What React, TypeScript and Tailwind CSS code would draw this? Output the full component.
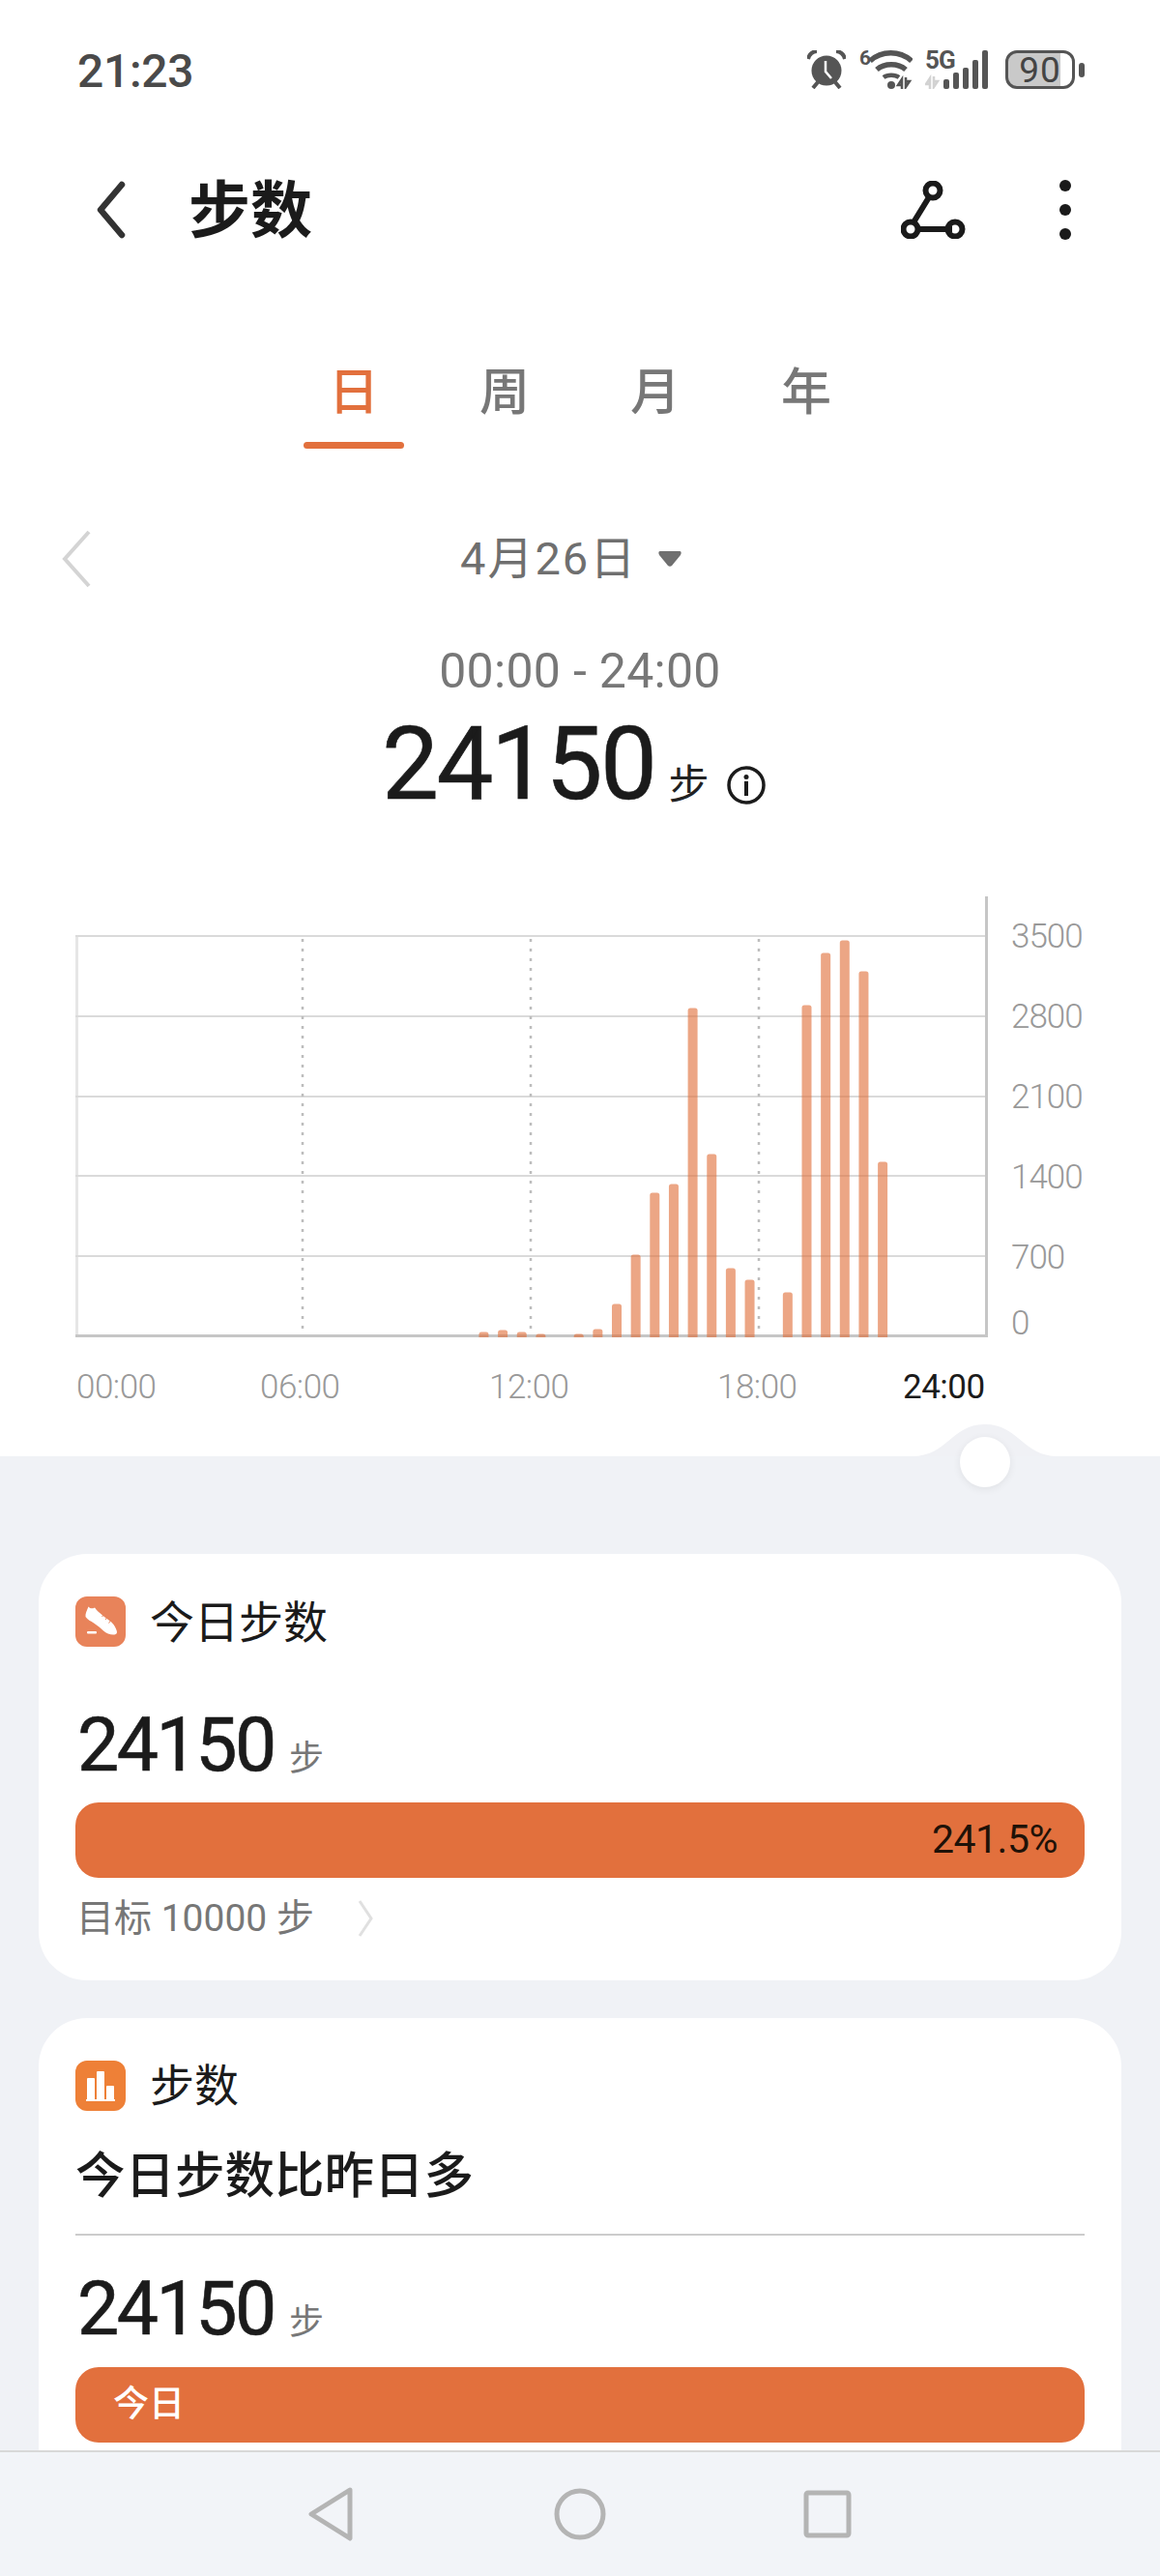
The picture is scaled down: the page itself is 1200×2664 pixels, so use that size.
import React from 'react';

// [half-hour slot, top of the bar in chart coordinates]
const bars: [number, number][] = [
  [21, 451], [22, 449], [23, 451], [24, 453], [26, 453], [27, 448], [28, 422], [29, 371],
  [30, 307], [31, 298], [32, 116], [33, 267], [34, 385], [35, 397], [37, 410], [38, 113],
  [39, 59], [40, 46], [41, 78], [42, 275],
];

function Chart() {
  return (
    <svg width="945" height="457" viewBox="0 0 945 457" className="block shrink-0">
      <rect x="0" y="40" width="3" height="415" fill="#e6e6e6" />
      {[40, 123, 206, 288, 371].map((y) => (
        <rect key={y} x="0" y={y} width="943" height="2" fill="#dadada" />
      ))}
      {[235, 471, 707].map((x) => (
        <line key={x} x1={x} x2={x} y1="44" y2="454" stroke="#bdbdbd" strokeWidth="2.5" strokeDasharray="3 7" />
      ))}
      <rect x="0" y="453" width="944" height="3" fill="#c6c6c6" />
      <rect x="941" y="0" width="3" height="456" fill="#c6c6c6" />
      {bars.map(([slot, top]) => (
        <path
          key={slot}
          d={`M${slot * 19.65 + 4.8} 456V${top + 2}q0 -2.5 2.5 -2.5h5q2.5 0 2.5 2.5V456Z`}
          fill="#e0703a"
          opacity="0.62"
        />
      ))}
    </svg>
  );
}

function ShoeIcon() {
  return (
    <svg width="52" height="52" viewBox="0 0 52 52" className="shrink-0">
      <rect width="52" height="52" rx="12" fill="#e8835a" />
      <path d="M13.500 10.500c1.500 2 4 2.500 6.500 1 2 3 5 5.500 8 8 4 3.500 9 6 11.500 9.500 2 3 3.500 6.500 3.500 8 0 2-2 2.500-4 2.500-3.500 0-7-1.500-10-4-3.500-3-6-5.500-10-8-3-2-6.500-3.500-8.500-6.500-.5-3 1.500-7 3-10.500Z" fill="#fff" />
      <path d="M29.500 18.500l-2 2.500M33 21.500l-2 2.500M36.500 25l-2 2.500" stroke="#e8835a" strokeWidth="1" />
      <rect x="12" y="36" width="10" height="2.500" rx="1" fill="#fff" />
    </svg>
  );
}

function BarsIcon() {
  return (
    <svg width="52" height="52" viewBox="0 0 52 52" className="shrink-0">
      <rect width="52" height="52" rx="12" fill="#ee8037" />
      <rect x="12" y="18" width="8" height="23" rx="1" fill="#fff" />
      <rect x="22" y="11" width="8" height="30" rx="1" fill="#fff" />
      <rect x="32" y="26" width="8" height="15" rx="1" fill="#fff" />
      <rect x="11" y="40" width="30" height="2" fill="#fff" />
    </svg>
  );
}

function Number24150({ top }: { top: string }) {
  return (
    <div className={`flex items-baseline h-[80px] pl-[2px] leading-[80px] ${top}`}>
      <span className="text-[77px] tracking-[-2.5px] text-[#1b1b1b] [-webkit-text-stroke:0.6px_#1b1b1b]">24150</span>
      <span className="text-[36px] text-[#777] ml-[15px]">步</span>
    </div>
  );
}

function StatusIcons() {
  return (
    <div className="flex items-center h-[40px]">
      <svg width="40" height="40" viewBox="0 0 40 40" className="shrink-0">
        <circle cx="20" cy="21" r="15.500" fill="#555" />
        <path d="M19 11v11l6 7" fill="none" stroke="#fff" strokeWidth="2.500" />
        <path d="M1 9c1-5 5-8 9-8M39 9c-1-5-5-8-9-8" fill="none" stroke="#555" strokeWidth="4" />
        <path d="M6 39l5-6M34 39l-5-6" stroke="#555" strokeWidth="4" />
      </svg>
      <div className="relative w-[55px] h-[40px] ml-[14px] shrink-0">
        <span className="absolute left-0 top-[-5px] text-[21px] leading-[26px] font-bold text-[#555]">6</span>
        <svg width="55" height="40" viewBox="0 0 55 40" className="block">
          <path d="M11 11c12-11 31-11 43 0" fill="none" stroke="#555" strokeWidth="5.500" />
          <path d="M18 20c8-7 22-7 30 0" fill="none" stroke="#555" strokeWidth="5.500" />
          <path d="M25 28c4-3 12-3 16 0" fill="none" stroke="#555" strokeWidth="4.500" />
          <circle cx="33" cy="36" r="4" fill="#555" />
          <path d="M44 40V30l-4 6h4M48 28v10l4-6h-4" fill="none" stroke="#555" strokeWidth="2.500" />
        </svg>
      </div>
      <div className="relative w-[66px] h-[40px] ml-[13px] shrink-0">
        <span className="absolute left-0 top-[-5px] text-[26px] leading-[30px] font-bold text-[#555] tracking-[-1px]">5G</span>
        <svg width="66" height="40" viewBox="0 0 66 40" className="block">
          <path d="M5 40V29l-4 6h4M9 27v11l4-6H9" fill="none" stroke="#d2d2d2" strokeWidth="2.500" />
          <rect x="19" y="30" width="6" height="10" rx="2" fill="#555" />
          <rect x="29" y="23" width="6" height="17" rx="2" fill="#555" />
          <rect x="39" y="18" width="6" height="22" rx="2" fill="#555" />
          <rect x="49" y="10" width="6" height="30" rx="2" fill="#555" />
          <rect x="59" y="0" width="6" height="40" rx="2" fill="#555" />
        </svg>
      </div>
      <div className="ml-[17px] flex items-center justify-center w-[72px] h-[40px] rounded-[12px] border-[3px] border-[#555] bg-[linear-gradient(90deg,#c9c9c9_82%,transparent_82%)] text-[37px] leading-none text-[#444] tracking-[1px]">
        90
      </div>
      <div className="ml-[4px] w-[6px] h-[15px] rounded-full bg-[#555]" />
    </div>
  );
}

export default function App() {
  return (
    <div className="[font-family:Roboto,'Noto_Sans_CJK_SC',sans-serif] w-[1200px] h-[2664px] flex flex-col overflow-hidden bg-white">
      <div className="relative z-10 h-[1506px] shrink-0 bg-white">
        <div className="flex items-center justify-between h-[144px] pl-[80px] pr-[78px]">
          <span className="pt-[3px] text-[48px] font-medium text-[#4a4a4a] tracking-[-0.3px]">21:23</span>
          <StatusIcons />
        </div>

        <div className="flex items-center h-[146px] pl-[100px] pr-[92px]">
          <svg width="30" height="60" viewBox="0 0 30 60" className="shrink-0">
            <path d="M26 4L4 30l22 26" fill="none" stroke="#333" strokeWidth="6.500" strokeLinecap="round" strokeLinejoin="round" />
          </svg>
          <span className="ml-[65px] pt-[3px] text-[64px] leading-none font-bold text-[#1b1b1b]">步数</span>
          <svg width="70" height="60" viewBox="0 0 70 60" className="ml-auto shrink-0">
            <g fill="none" stroke="#1a1a1a" strokeWidth="6">
              <path d="M29 17L13 43M20 50h33" />
              <circle cx="33" cy="10" r="7.500" />
              <circle cx="10" cy="50" r="7.500" />
              <circle cx="56" cy="50" r="7.500" />
            </g>
          </svg>
          <div className="ml-[94px] flex flex-col gap-[13px]">
            <div className="w-[12px] h-[12px] rounded-full bg-[#1a1a1a]" />
            <div className="w-[12px] h-[12px] rounded-full bg-[#1a1a1a]" />
            <div className="w-[12px] h-[12px] rounded-full bg-[#1a1a1a]" />
          </div>
        </div>

        <div className="flex justify-center h-[174px] text-[52px] font-medium text-[#777]">
          {['日', '周', '月', '年'].map((t, i) => (
            <div key={t} className="w-[156px] flex flex-col items-center justify-end">
              <span className={i === 0 ? 'leading-[70px] text-[#e2703d]' : 'leading-[70px]'}>{t}</span>
              <div className={i === 0 ? 'mt-[15px] w-[104px] h-[7px] rounded-full bg-[#e2703d]' : 'mt-[15px] w-[104px] h-[7px]'} />
            </div>
          ))}
        </div>

        <div className="flex items-center h-[76px] mt-[76px] pl-[62px]">
          <svg width="34" height="62" viewBox="0 0 34 62" className="shrink-0">
            <path d="M30 3L5 31l25 28" fill="none" stroke="#d4d4d4" strokeWidth="4" />
          </svg>
          <span className="ml-[380px] text-[47px] text-[#6f6f6f] tracking-[2px]">4月26日</span>
          <svg width="24" height="18" viewBox="0 0 24 18" className="ml-[22px] shrink-0">
            <path d="M2 1h20c2 0 2 2 1 4l-9 11c-1 1-3 1-4 0L1 5C0 3 0 1 2 1Z" fill="#6f6f6f" />
          </svg>
        </div>

        <div className="h-[60px] mt-[48px] text-center text-[50px] leading-[60px] text-[#777] tracking-[0.3px]">00:00 - 24:00</div>

        <div className="flex items-baseline h-[110px] mt-[12px] pl-[395px] leading-[110px]">
          <span className="text-[105px] tracking-[-2.5px] text-[#1b1b1b] [-webkit-text-stroke:0.6px_#1b1b1b]">24150</span>
          <span className="text-[42px] text-[#222] ml-[14px]">步</span>
          <svg width="40" height="40" viewBox="0 0 40 40" className="ml-[18px] self-end mb-[14px] shrink-0">
            <circle cx="20" cy="20" r="18" fill="none" stroke="#1b1b1b" strokeWidth="3.500" />
            <circle cx="20" cy="11.500" r="2.500" fill="#1b1b1b" />
            <rect x="18" y="16" width="4" height="15" fill="#1b1b1b" />
          </svg>
        </div>

        <div className="flex mt-[81px] pl-[78px]">
          <Chart />
          <div className="ml-[23px] text-[35px] tracking-[-1px] font-light text-[#999]">
            <div className="h-[83px] leading-[83px]">3500</div>
            <div className="h-[83px] leading-[83px]">2800</div>
            <div className="h-[83px] leading-[83px]">2100</div>
            <div className="h-[83px] leading-[83px]">1400</div>
            <div className="h-[83px] leading-[83px]">700</div>
            <div className="h-[40px] leading-[40px] mt-[7px]">0</div>
          </div>
        </div>

        <div className="flex h-[46px] mt-[23px] pl-[79px] text-[35px] tracking-[-0.5px] font-light leading-[46px] text-[#999]">
          <span className="w-[85px]">00:00</span>
          <span className="w-[85px] ml-[105px]">06:00</span>
          <span className="w-[85px] ml-[152px]">12:00</span>
          <span className="w-[85px] ml-[151px]">18:00</span>
          <span className="w-[85px] ml-[107px] text-[#1b1b1b] font-normal">24:00</span>
        </div>

        <svg width="150" height="34" viewBox="0 0 150 34" className="absolute left-[944px] bottom-0">
          <path d="M0 34C36 34 40 1 75 1S114 34 150 34Z" fill="#f0f1f5" />
        </svg>
        <div className="absolute left-[993px] top-[1486px] w-[52px] h-[52px] rounded-full bg-white shadow-[0_2px_8px_rgba(0,0,0,0.07)]" />
      </div>

      <div className="flex-1 min-h-0 overflow-hidden bg-[#f0f2f6] px-[40px] pt-[101px]">
        <div className="h-[441px] rounded-[50px] bg-white px-[38px] pt-[44px]">
          <div className="flex items-center h-[52px]">
            <ShoeIcon />
            <span className="ml-[25px] pt-[2px] text-[46px] leading-none text-[#1b1b1b]">今日步数</span>
          </div>
          <Number24150 top="mt-[62px]" />
          <div className="flex items-center justify-end h-[78px] mt-[19px] pr-[28px] rounded-[24px] bg-[#e2703d] text-[41px] tracking-[-0.5px] text-[#1f1208]">241.5%</div>
          <div className="flex items-center h-[50px] mt-[17px] pl-[1px] text-[39px] text-[#777]">
            <span>目标 10000 步</span>
            <svg width="18" height="40" viewBox="0 0 18 40" className="ml-[44px] shrink-0">
              <path d="M3 2l12 18L3 38" fill="none" stroke="#e0e0e0" strokeWidth="3" />
            </svg>
          </div>
        </div>

        <div className="mt-[39px] h-[560px] rounded-[50px] bg-white px-[38px] pt-[44px]">
          <div className="flex items-center h-[52px]">
            <BarsIcon />
            <span className="ml-[25px] text-[46px] leading-none text-[#1b1b1b]">步数</span>
          </div>
          <div className="mt-[33px] h-[70px] text-[51.500px] leading-[70px] font-medium text-[#1b1b1b]">今日步数比昨日多</div>
          <div className="mt-[24px] h-[2px] bg-[#cccccc]" />
          <Number24150 top="mt-[36px]" />
          <div className="flex items-center h-[78px] mt-[20px] pl-[39px] rounded-[24px] bg-[#e2703d] text-[37px] font-medium text-white">今日</div>
        </div>
      </div>

      <div className="flex items-center justify-center gap-[200px] h-[130px] shrink-0 border-t-2 border-[#d8d8d8] bg-[#f2f4f8]">
        <svg width="56" height="56" viewBox="0 0 56 56" className="shrink-0">
          <path d="M46 3L6 28l40 25Z" fill="none" stroke="#b4b4b4" strokeWidth="5" strokeLinejoin="round" />
        </svg>
        <svg width="56" height="56" viewBox="0 0 56 56" className="shrink-0">
          <circle cx="28" cy="28" r="24" fill="none" stroke="#b4b4b4" strokeWidth="5" />
        </svg>
        <svg width="56" height="56" viewBox="0 0 56 56" className="shrink-0">
          <rect x="6" y="6" width="44" height="44" rx="2" fill="none" stroke="#b4b4b4" strokeWidth="5" />
        </svg>
      </div>
    </div>
  );
}
